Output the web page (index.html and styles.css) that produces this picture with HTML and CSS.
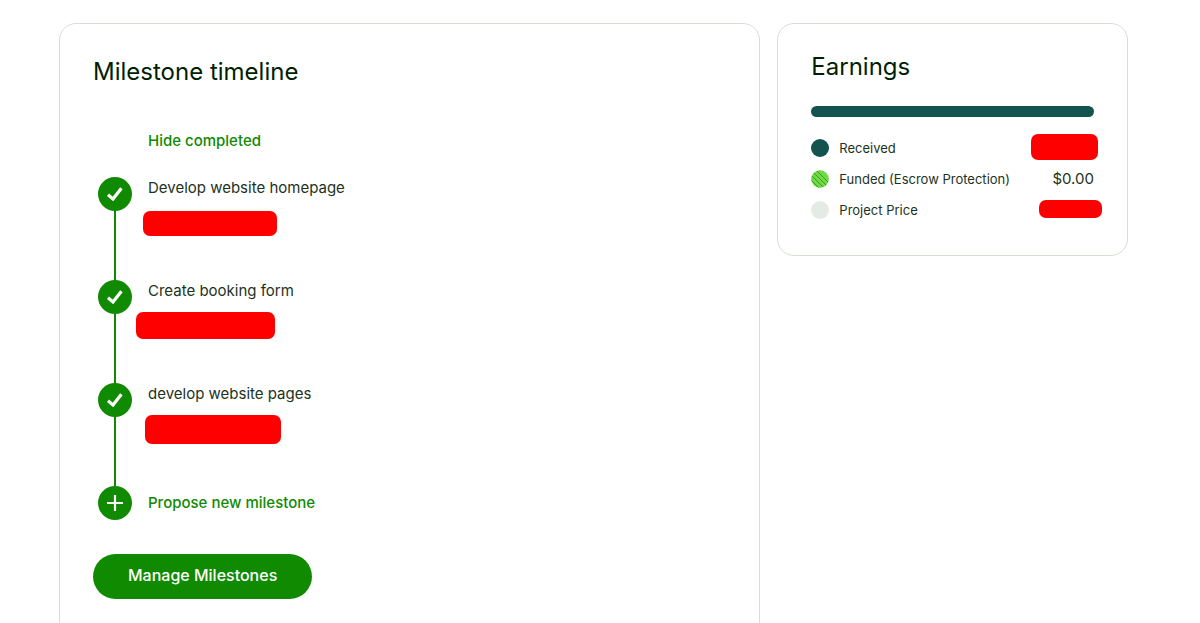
FILE: index.html
```html
<!DOCTYPE html>
<html lang="en">
  <head>
    <meta charset="UTF-8" />
    <meta name="viewport" content="width=device-width, initial-scale=1.0" />
    <title>Milestones</title>

    <link rel="stylesheet" href="styles.css">
  </head>
  <body>
    <main class="container">
      <!-- Milestones -->
      <section class="card milestones">
        <h1>Milestone timeline</h1>

        <button type="button" class="link-button hide-completed">Hide completed</button>

        <ol class="timeline">
          <li class="milestone">
            <span class="marker">
              <svg width="18" height="18" viewBox="0 0 18 18" aria-hidden="true">
                <path d="M2 9.8 L7 14 L15.4 3.2" fill="none" stroke="#fff" stroke-width="3.2" />
              </svg>
            </span>
            <div class="milestone-name">Develop website homepage</div>
            <span class="redacted redacted-homepage"></span>
          </li>
          <li class="milestone">
            <span class="marker">
              <svg width="18" height="18" viewBox="0 0 18 18" aria-hidden="true">
                <path d="M2 9.8 L7 14 L15.4 3.2" fill="none" stroke="#fff" stroke-width="3.2" />
              </svg>
            </span>
            <div class="milestone-name">Create booking form</div>
            <span class="redacted redacted-booking"></span>
          </li>
          <li class="milestone">
            <span class="marker">
              <svg width="18" height="18" viewBox="0 0 18 18" aria-hidden="true">
                <path d="M2 9.8 L7 14 L15.4 3.2" fill="none" stroke="#fff" stroke-width="3.2" />
              </svg>
            </span>
            <div class="milestone-name">develop website pages</div>
            <span class="redacted redacted-pages"></span>
          </li>
          <li class="milestone milestone-new">
            <span class="marker">
              <svg width="18" height="18" viewBox="0 0 18 18" aria-hidden="true">
                <path d="M9 1 V17 M1 9 H17" fill="none" stroke="#fff" stroke-width="2.2" />
              </svg>
            </span>
            <button type="button" class="link-button">Propose new milestone</button>
          </li>
        </ol>

        <button type="button" class="manage-button">Manage Milestones</button>
      </section>

      <!-- Earnings -->
      <aside class="card earnings">
        <h2>Earnings</h2>
        <div class="earnings-bar"></div>

        <dl class="earnings-list">
          <div class="earnings-row">
            <dt><span class="dot dot-received"></span>Received</dt>
            <dd><span class="redacted redacted-received"></span></dd>
          </div>
          <div class="earnings-row">
            <dt>
              <svg class="dot" width="18" height="18" viewBox="0 0 18 18" aria-hidden="true">
                <clipPath id="dot-clip"><circle cx="9" cy="9" r="9" /></clipPath>
                <g clip-path="url(#dot-clip)">
                  <rect width="18" height="18" fill="#6fda44" />
                  <path d="M-5 0 L13 18 M0 0 L18 18 M5 0 L23 18 M-10 0 L8 18" stroke="#3a9a2a" stroke-width="1" />
                </g>
              </svg>
              Funded (Escrow Protection)
            </dt>
            <dd>$0.00</dd>
          </div>
          <div class="earnings-row">
            <dt><span class="dot dot-price"></span>Project Price</dt>
            <dd><span class="redacted redacted-price"></span></dd>
          </div>
        </dl>
      </aside>
    </main>
  </body>
</html>
```

FILE: styles.css
```css
* {
  box-sizing: border-box;
}

body {
  margin: 0;
  background-color: #fff;
  color: #001e00;
  font-family: "Inter", "Liberation Sans", sans-serif;
  font-size: 15px;
  line-height: 20px;
}

.container {
  display: grid;
  grid-template-columns: 2fr 1fr;
  gap: 17px;
  align-items: start;
  padding: 23px 72px 24px 59px;
}

.card {
  border: 1px solid #d5e0d5;
  border-radius: 17px;
  padding: 32px 33px;
}

.milestones {
  min-height: 100vh;
}

h1,
h2 {
  margin: 0;
  font-size: 24px;
  font-weight: 400;
  line-height: 32px;
}

/* Timeline */
.link-button {
  border: none;
  background: none;
  padding: 0;
  color: #108a00;
  font: inherit;
  font-weight: 500;
  cursor: pointer;
}

.hide-completed {
  display: block;
  margin: 43px 0 0 55px;
}

.timeline {
  list-style: none;
  margin: 26px 0 0 5px;
  padding: 0;
}

.milestone {
  position: relative;
  display: flex;
  gap: 16px;
  height: 103px;
  color: #1c331c;
}

.milestone-name {
  line-height: 22px;
}

/* Line to the next marker */
.milestone:not(.milestone-new)::before {
  content: "";
  position: absolute;
  top: 17px;
  left: 16px;
  width: 2px;
  height: 100%;
  background-color: #108a00;
}

.milestone-new {
  align-items: center;
  height: 34px;
}

.marker {
  position: relative;
  z-index: 1;
  display: flex;
  flex-shrink: 0;
  justify-content: center;
  align-items: center;
  width: 34px;
  height: 34px;
  border-radius: 50%;
  background-color: #108a00;
}

.manage-button {
  margin-top: 34px;
  padding: 11px 35px 14px;
  border: none;
  border-radius: 23px;
  background-color: #108a00;
  color: #fff;
  font: inherit;
  font-size: 16px;
  font-weight: 500;
  cursor: pointer;
}

/* Masked amounts, laid over the values */
.redacted {
  position: absolute;
  border-radius: 7px;
  background-color: #f00;
}

.redacted-homepage {
  top: 34px;
  left: 45px;
  width: 134px;
  height: 25px;
}

.redacted-booking {
  top: 32px;
  left: 38px;
  width: 139px;
  height: 27px;
}

.redacted-pages {
  top: 32px;
  left: 47px;
  width: 136px;
  height: 29px;
}

.redacted-received {
  top: -4px;
  right: -4px;
  width: 67px;
  height: 26px;
}

.redacted-price {
  top: 0;
  right: -8px;
  width: 63px;
  height: 18px;
}

/* Earnings */
.earnings {
  padding: 27px 33px 35px;
}

.earnings-bar {
  height: 11px;
  margin-top: 23px;
  border-radius: 6px;
  background-color: #14544e;
}

.earnings-list {
  display: flex;
  flex-direction: column;
  gap: 11px;
  margin: 21px 0 0;
}

.earnings-row {
  position: relative;
  display: flex;
  justify-content: space-between;
  color: #1c331c;
}

.earnings-row dt {
  display: flex;
  align-items: center;
  gap: 10px;
  font-size: 13px;
}

.earnings-row dd {
  margin: 0;
}

.dot {
  flex-shrink: 0;
  width: 18px;
  height: 18px;
  border-radius: 50%;
}

.dot-received {
  background-color: #14544e;
}

.dot-price {
  background-color: #e4ebe4;
}
```
